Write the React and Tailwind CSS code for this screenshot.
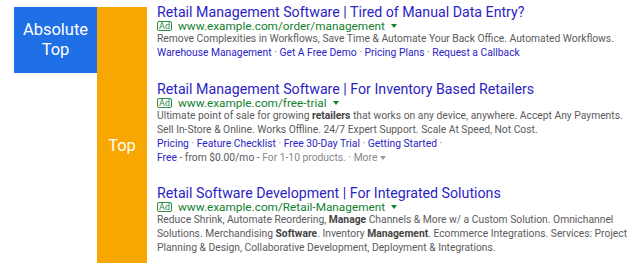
import React from "react";

const Dot = () => <span className="text-[#777]"> · </span>;

function AdLine({ url }) {
  return (
    <div className="flex items-center h-[12px]">
      <span className="inline-flex items-center justify-center border border-[#2f8a47] text-[#2f8a47] rounded-[2px] text-[9px] leading-none h-[10px] w-[15px] mr-[6px]">Ad</span>
      <span className="text-[#13802f] text-[11.8px] leading-[12px]">{url}</span>
      <span className="ml-[6px] w-0 h-0 border-l-[3px] border-r-[3px] border-t-[4px] border-l-transparent border-r-transparent border-t-[#13802f]"></span>
    </div>
  );
}

export default function App() {
  return (
    <div className="w-[640px] h-[267px] bg-white flex pt-[7px] pl-[14px]" style={{ fontFamily: "Roboto, 'Liberation Sans', sans-serif" }}>
      <div className="w-[83px] h-[66px] bg-[#1f6fe6] text-white text-[16.5px] leading-[20px] flex flex-col items-center justify-center text-center">
        <div>Absolute</div>
        <div>Top</div>
      </div>
      <div className="w-[50px] h-[256px] bg-[#f8a700] text-white text-[16.5px] flex justify-center pt-[129px]">
        <span className="leading-[20px] h-[20px]">Top</span>
      </div>
      <div className="ml-[10px] mt-[-3px] flex flex-col text-[10.3px] leading-[14px] text-[#5b5b5b]">
        <div className="text-[#2b23c4] text-[14.2px] leading-[16px]">Retail Management Software | Tired of Manual Data Entry?</div>
        <AdLine url="www.example.com/order/management" />
        <div>Remove Complexities in Workflows, Save Time &amp; Automate Your Back Office. Automated Workflows.</div>
        <div className="text-[#2b23c4]">Warehouse Management<Dot />Get A Free Demo<Dot />Pricing Plans<Dot />Request a Callback</div>

        <div className="text-[#2b23c4] text-[14.2px] leading-[16px] mt-[21px]">Retail Management Software | For Inventory Based Retailers</div>
        <AdLine url="www.example.com/free-trial" />
        <div>Ultimate point of sale for growing <b className="font-bold text-[#444]">retailers</b> that works on any device, anywhere. Accept Any Payments.</div>
        <div>Sell In-Store &amp; Online. Works Offline. 24/7 Expert Support. Scale At Speed, Not Cost.</div>
        <div className="text-[#2b23c4]">Pricing<Dot />Feature Checklist<Dot />Free 30-Day Trial<Dot />Getting Started<Dot /></div>
        <div><span className="text-[#2b23c4]">Free</span> - from $0.00/mo - <span className="text-[#888]">For 1-10 products.<Dot />More</span><span className="inline-block ml-[3px] align-middle w-0 h-0 border-l-[3px] border-r-[3px] border-t-[4px] border-l-transparent border-r-transparent border-t-[#999]"></span></div>

        <div className="text-[#2b23c4] text-[14.2px] leading-[16px] mt-[20px]">Retail Software Development | For Integrated Solutions</div>
        <AdLine url="www.example.com/Retail-Management" />
        <div>Reduce Shrink, Automate Reordering, <b className="font-bold text-[#444]">Manage</b> Channels &amp; More w/ a Custom Solution. Omnichannel</div>
        <div>Solutions. Merchandising <b className="font-bold text-[#444]">Software</b>. Inventory <b className="font-bold text-[#444]">Management</b>. Ecommerce Integrations. Services: Project</div>
        <div>Planning &amp; Design, Collaborative Development, Deployment &amp; Integrations.</div>
      </div>
    </div>
  );
}
